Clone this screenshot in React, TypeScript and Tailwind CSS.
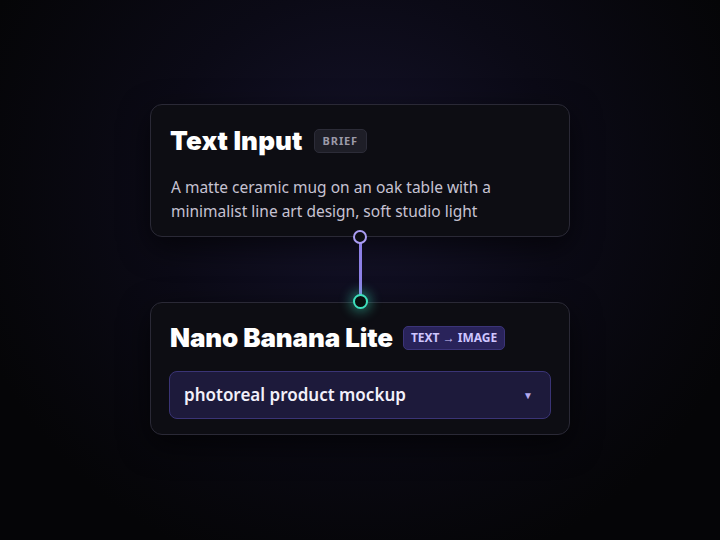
export default function App() {
  return (
    <div
      className="w-[720px] h-[540px] flex flex-col items-center pt-[104px] bg-[radial-gradient(ellipse_at_50%_35%,#15132b_0%,#0b0a16_40%,#050507_80%)]"
      style={{ fontFamily: '"Noto Sans", "Open Sans", sans-serif' }}
    >
      <div className="w-[420px] h-[133px] rounded-xl border border-[#2a2936] bg-[#0d0d13] px-[18px] pt-[19px] shadow-[0_10px_30px_rgba(0,0,0,0.6)]">
        <div className="flex items-center gap-[11px]">
          <h1 className="text-[26px] leading-[34px] font-black tracking-[0.005em] text-white pl-px" style={{ fontFamily: 'Inter, sans-serif' }}>
            Text Input
          </h1>
          <span className="h-6 px-2 flex items-center rounded-[5px] bg-[#1e1e27] border border-[#2c2c38] text-[11px] font-bold tracking-[0.08em] text-[#9c9aa8]">
            BRIEF
          </span>
        </div>
        <p className="mt-[17px] pl-[2px] text-[15.5px] leading-6 text-[#c6c2d2] w-[360px]">
          A matte ceramic mug on an oak table with a minimalist line art design, soft studio light
        </p>
      </div>

      <div className="relative w-[420px] h-[65px] flex justify-center">
        <div className="absolute top-[-7px] w-[14px] h-[14px] rounded-full border-2 border-[#a99cf2] bg-[#0d0d13] z-10" />
        <div className="w-[3px] h-full bg-[#8d80e6]" />
        <div className="absolute bottom-[-7px] w-[15px] h-[15px] rounded-full border-[2.5px] border-[#3ee0bd] bg-[#08100f] z-10 shadow-[0_0_12px_3px_rgba(62,224,189,0.45)]" />
      </div>

      <div className="w-[420px] h-[133px] rounded-xl border border-[#2a2936] bg-[#0d0d13] px-[18px] pt-[18px] shadow-[0_10px_30px_rgba(0,0,0,0.6)]">
        <div className="flex items-center gap-[10px]">
          <h2 className="text-[26px] leading-[34px] font-black tracking-[-0.005em] text-white pl-px" style={{ fontFamily: 'Inter, sans-serif' }}>
            Nano Banana Lite
          </h2>
          <span className="h-6 px-[7px] flex items-center rounded-[5px] bg-[#29235a] border border-[#3b3478] text-[12px] font-bold tracking-normal text-[#cfc6ff]">
            TEXT → IMAGE
          </span>
        </div>
        <div className="mt-[16px] h-[48px] rounded-lg border border-[#3a3475] bg-[#1d1a3b] flex items-center justify-between pl-[14px] pr-[17px]">
          <span className="text-[17px] font-semibold text-[#f2f0fa]">photoreal product mockup</span>
          <span className="text-[10px] text-[#b3aaf0]">▼</span>
        </div>
      </div>
    </div>
  );
}
